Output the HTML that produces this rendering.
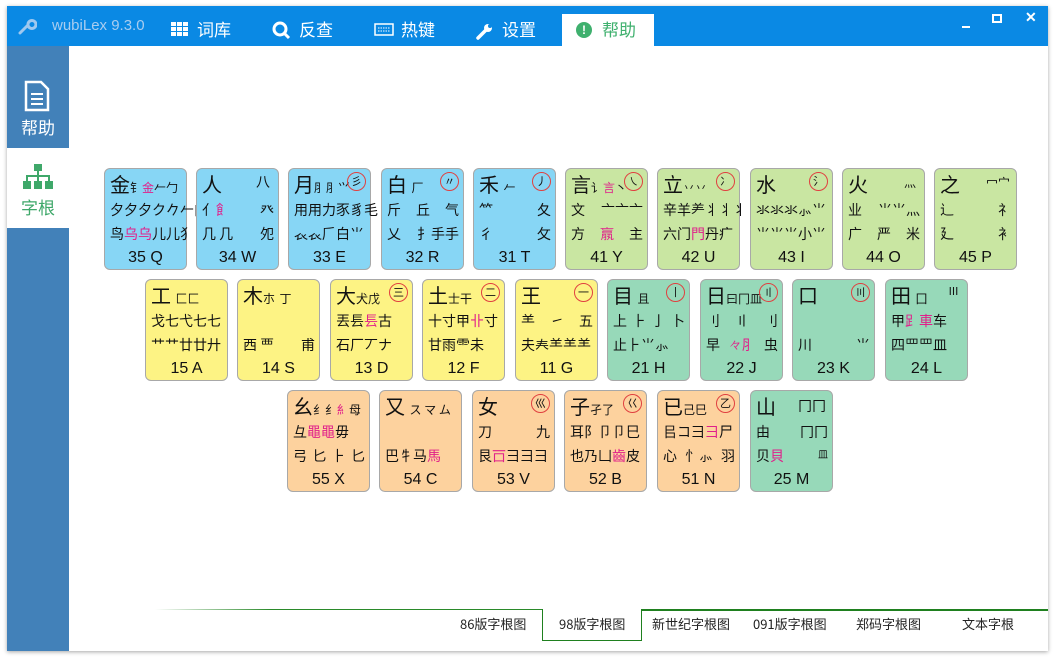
<!DOCTYPE html>
<html><head><meta charset="utf-8"><style>
*{margin:0;padding:0;box-sizing:border-box}
body{width:1057px;height:658px;background:#fff;position:relative;overflow:hidden;font-family:"Liberation Sans","Noto Sans CJK SC",sans-serif}
.win{position:absolute;left:7px;top:6px;width:1041px;height:645px;background:#fff;box-shadow:0 1px 4px rgba(0,0,0,.35)}
.title{position:absolute;left:0;top:0;width:1041px;height:40px;background:#0a89e4}
.t{position:absolute;top:10px;color:#fff;font-size:17px;font-family:"Noto Sans CJK SC",sans-serif}
.side{position:absolute;left:0;top:40px;width:62px;height:605px;background:#4281b9}
.sact{position:absolute;left:0;top:102px;width:62px;height:80px;background:#fff}
.key{position:absolute;width:83px;height:102px;border:1px solid #a8a8a8;border-radius:6px;font-family:"Noto Sans CJK SC",sans-serif;color:#111}
.l1{position:absolute;left:5px;top:0px;font-size:20px;white-space:nowrap}
.l1 small{font-size:12px}
.l2,.l3{position:absolute;left:5px;right:4px;font-size:14px;white-space:nowrap;display:flex;justify-content:space-between}
.l2{top:31px}.l3{top:55px}
.lab{position:absolute;left:0;right:0;top:80px;text-align:center;font-family:"Liberation Sans",sans-serif;font-size:16px}
.c{position:absolute;right:4px;top:3px;width:19px;height:19px;border:1px solid #e04040;border-radius:50%;font-size:11px;text-align:center;line-height:17px}
.p{color:#e0208a}
.B{background:#87d6f5}.G{background:#c9e6a2}.Y{background:#fdf384}.T{background:#97d9b9}.O{background:#fdd29e}
.tabs{position:absolute;top:608px;font-size:13px;font-family:"Noto Sans CJK SC",sans-serif;color:#222}
</style></head><body>
<div class="win">
<div class="title">
<svg style="position:absolute;left:10px;top:10px" width="20" height="20" viewBox="0 0 20 20"><path d="M3 17 L11 9 M11 9 a4 4 0 1 0 0 -1" stroke="#9fc8ef" stroke-width="3" fill="none" stroke-linecap="round"/></svg>
<div class="t" style="left:45px;top:11px;font-family:'Liberation Sans',sans-serif;font-size:15px;color:#a9cdf0">wubiLex 9.3.0</div>
<svg style="position:absolute;left:164px;top:16px" width="18" height="16"><g fill="#fff"><rect x="0" y="0" width="5" height="4"/><rect x="6" y="0" width="5" height="4"/><rect x="12" y="0" width="5" height="4"/><rect x="0" y="5" width="5" height="4"/><rect x="6" y="5" width="5" height="4"/><rect x="12" y="5" width="5" height="4"/><rect x="0" y="10" width="5" height="4"/><rect x="6" y="10" width="5" height="4"/><rect x="12" y="10" width="5" height="4"/></g></svg>
<div class="t" style="left:190px">词库</div>
<svg style="position:absolute;left:265px;top:15px" width="20" height="20"><circle cx="8" cy="8" r="6" stroke="#fff" stroke-width="3" fill="none"/><path d="M12 12 L17 17" stroke="#fff" stroke-width="3"/></svg>
<div class="t" style="left:292px">反查</div>
<svg style="position:absolute;left:367px;top:17px" width="20" height="13"><rect x="1" y="1" width="18" height="11" stroke="#fff" stroke-width="1.5" fill="none"/><path d="M4 5h12M4 8h12" stroke="#fff" stroke-dasharray="1.5 1"/></svg>
<div class="t" style="left:394px">热键</div>
<svg style="position:absolute;left:468px;top:15px" width="20" height="20"><path d="M3 17 L11 9" stroke="#fff" stroke-width="3.5" stroke-linecap="round"/><circle cx="13" cy="7" r="4" fill="#fff"/><circle cx="15" cy="5" r="2" fill="#0a89e4"/></svg>
<div class="t" style="left:495px">设置</div>
<div style="position:absolute;left:555px;top:8px;width:92px;height:32px;background:#fff"></div>
<div style="position:absolute;left:569px;top:16px;width:16px;height:16px;border-radius:50%;background:#3fb06e;color:#fff;font-size:12px;font-weight:bold;text-align:center;line-height:16px">!</div>
<div class="t" style="left:595px;color:#3fb06e">帮助</div>
<div style="position:absolute;left:955px;top:20px;width:8px;height:2px;background:#fff"></div>
<div style="position:absolute;left:985px;top:8px;width:10px;height:9px;border:2px solid #fff"></div>
<div style="position:absolute;left:1018px;top:3px;color:#fff;font-size:14px;font-weight:bold">✕</div>
</div>
<div class="side">
<svg style="position:absolute;left:17px;top:34px" width="26" height="32"><path d="M2 2h15l7 7v21H2z" stroke="#fff" stroke-width="2.5" fill="none"/><path d="M7 14h12M7 19h12M7 24h12" stroke="#fff" stroke-width="2"/></svg>
<div style="position:absolute;left:14px;top:68px;color:#fff;font-size:17px;font-family:'Noto Sans CJK SC',sans-serif">帮助</div>
<div class="sact">
<svg style="position:absolute;left:16px;top:16px" width="30" height="26"><g fill="#3fa86a"><rect x="11" y="0" width="8" height="7"/><rect x="14" y="7" width="2" height="5"/><rect x="3" y="11" width="24" height="2"/><rect x="3" y="11" width="2" height="6"/><rect x="25" y="11" width="2" height="6"/><rect x="14" y="11" width="2" height="6"/><rect x="0" y="17" width="8" height="8"/><rect x="11" y="17" width="8" height="8"/><rect x="22" y="17" width="8" height="8"/></g></svg>
<div style="position:absolute;left:14px;top:46px;color:#3fa86a;font-size:17px;font-family:'Noto Sans CJK SC',sans-serif">字根</div>
</div>
</div>
<div style="position:absolute;left:148px;top:603px;width:387px;height:1px;background:linear-gradient(90deg,#fff,#2a8a2a 30%)"></div>
<div style="position:absolute;left:535px;top:603px;width:100px;height:32px;border:1.5px solid #1f801f;border-top:none;background:#fff"></div>
<div style="position:absolute;left:634px;top:603px;width:407px;height:1.5px;background:#1f801f"></div>
<div class="tabs" style="left:453px">86版字根图</div>
<div class="tabs" style="left:552px">98版字根图</div>
<div class="tabs" style="left:645px">新世纪字根图</div>
<div class="tabs" style="left:746px">091版字根图</div>
<div class="tabs" style="left:849px">郑码字根图</div>
<div class="tabs" style="left:955px">文本字根</div>
</div>

<div class="key B" style="left:104px;top:168px"><div class="l1">金<small>钅<span class="p">金</span>𠂉勹</small></div><div class="l2"><span>夕夕夕ク𠂊𠂉甶</span></div><div class="l3"><span>鸟<span class="p">乌乌</span>儿儿犭</span></div><div class="lab">35 Q</div></div>
<div class="key B" style="left:196px;top:168px"><div class="l1">人</div><div style="position:absolute;right:8px;top:3px;font-size:14px">八</div><div class="l2"><span>亻<span class="p">飠</span></span><span>癶</span></div><div class="l3"><span>几 几</span><span>夗</span></div><div class="lab">34 W</div></div>
<div class="key B" style="left:288px;top:168px"><div class="l1">月<small>⺼⺼⺍</small></div><div class="c">彡</div><div class="l2"><span>用用力豕豸毛</span></div><div class="l3"><span>𧘇𧘇𠂆白⺌</span></div><div class="lab">33 E</div></div>
<div class="key B" style="left:381px;top:168px"><div class="l1">白 <small>厂</small></div><div class="c">〃</div><div class="l2"><span>斤</span><span>丘</span><span>气</span></div><div class="l3"><span>乂</span><span>扌手手</span></div><div class="lab">32 R</div></div>
<div class="key B" style="left:473px;top:168px"><div class="l1">禾 <small>𠂉</small></div><div class="c">丿</div><div class="l2"><span>𥫗</span><span>夂</span></div><div class="l3"><span>彳</span><span>攵</span></div><div class="lab">31 T</div></div>
<div class="key G" style="left:565px;top:168px"><div class="l1">言<small>讠<span class="p">言</span>丶</small></div><div class="c">㇏</div><div class="l2"><span>文</span><span>亠亠亠</span></div><div class="l3"><span>方</span><span class="p">𣎆</span><span>主</span></div><div class="lab">41 Y</div></div>
<div class="key G" style="left:657px;top:168px"><div class="l1">立<small>丷丷</small></div><div class="c">冫</div><div class="l2"><span>辛羊⺶丬丬丬</span></div><div class="l3"><span>六门<span class="p">門</span>丹疒</span></div><div class="lab">42 U</div></div>
<div class="key G" style="left:750px;top:168px"><div class="l1">水 </div><div class="c">氵</div><div class="l2"><span>氺氺氺⺗⺌</span></div><div class="l3"><span>⺌⺌⺌小⺌</span></div><div class="lab">43 I</div></div>
<div class="key G" style="left:842px;top:168px"><div class="l1">火</div><div style="position:absolute;right:8px;top:5px;font-size:12px">灬</div><div class="l2"><span>业</span><span>⺌⺌灬</span></div><div class="l3"><span>广</span><span>严</span><span>米</span></div><div class="lab">44 O</div></div>
<div class="key G" style="left:934px;top:168px"><div class="l1">之</div><div style="position:absolute;right:6px;top:5px;font-size:12px">冖宀</div><div class="l2"><span>辶</span><span>礻</span></div><div class="l3"><span>廴</span><span>衤</span></div><div class="lab">45 P</div></div>

<div class="key Y" style="left:145px;top:279px"><div class="l1">工 <small>匚匚</small></div><div class="l2"><span>戈七弋七七</span></div><div class="l3"><span>艹艹廿廿廾</span></div><div class="lab">15 A</div></div>
<div class="key Y" style="left:237px;top:279px"><div class="l1">木<small>朩</small> <small>丁</small></div><div class="l2"><span></span></div><div class="l3"><span>西 覀</span><span>甫</span></div><div class="lab">14 S</div></div>
<div class="key Y" style="left:330px;top:279px"><div class="l1">大<small>犬戊</small></div><div class="c">三</div><div class="l2"><span>丟镸<span class="p">镸</span>古</span></div><div class="l3"><span>石厂丆ナ</span></div><div class="lab">13 D</div></div>
<div class="key Y" style="left:422px;top:279px"><div class="l1">土<small>士干</small></div><div class="c">二</div><div class="l2"><span>十寸甲<span class="p">卝</span>寸</span></div><div class="l3"><span>甘雨⻗未</span></div><div class="lab">12 F</div></div>
<div class="key Y" style="left:515px;top:279px"><div class="l1">王</div><div class="c">一</div><div class="l2"><span>⺷</span><span>㇀</span><span>五</span></div><div class="l3"><span>夫𡗗⺷⺷⺷</span></div><div class="lab">11 G</div></div>
<div class="key T" style="left:607px;top:279px"><div class="l1">目 <small>且</small></div><div class="c">丨</div><div class="l2"><span>上</span><span>⺊</span><span>亅</span><span>卜</span></div><div class="l3"><span>止⺊⺌⺗</span></div><div class="lab">21 H</div></div>
<div class="key T" style="left:700px;top:279px"><div class="l1">日<small>曰冂皿</small></div><div class="c">〢</div><div class="l2"><span>刂</span><span>〢</span><span>刂</span></div><div class="l3"><span>早</span><span class="p">𠚤⺼</span><span>虫</span></div><div class="lab">22 J</div></div>
<div class="key T" style="left:792px;top:279px"><div class="l1">口</div><div class="c">〣</div><div class="l2"></div><div class="l3"><span>川</span><span>⺌</span></div><div class="lab">23 K</div></div>
<div class="key T" style="left:885px;top:279px"><div class="l1">田 <small>囗</small></div><div class="c" style="border:none">Ⅲ</div><div class="l2"><span>甲<span class="p">⻊車</span>车</span></div><div class="l3"><span>四罒罒皿</span></div><div class="lab">24 L</div></div>

<div class="key O" style="left:287px;top:390px"><div class="l1">幺<small>纟纟<span class="p">糹</span>母</small></div><div class="l2"><span>彑<span class="p">黽黽</span>毋</span></div><div class="l3"><span>弓</span><span>匕</span><span>⺊</span><span>匕</span></div><div class="lab">55 X</div></div>
<div class="key O" style="left:379px;top:390px"><div class="l1">又 <small>ス マ ム</small></div><div class="l2"></div><div class="l3"><span>巴牜马<span class="p">馬</span></span></div><div class="lab">54 C</div></div>
<div class="key O" style="left:472px;top:390px"><div class="l1">女</div><div class="c">巛</div><div class="l2"><span>刀</span><span>九</span></div><div class="l3"><span>艮<span class="p">𠮛</span>彐彐彐</span></div><div class="lab">53 V</div></div>
<div class="key O" style="left:564px;top:390px"><div class="l1">子<small>孑了</small></div><div class="c">巜</div><div class="l2"><span>耳阝卩卩巳</span></div><div class="l3"><span>也乃凵<span class="p">齒</span>皮</span></div><div class="lab">52 B</div></div>
<div class="key O" style="left:657px;top:390px"><div class="l1">已<small>己巳</small></div><div class="c">乙</div><div class="l2"><span>㠯コ⺕<span class="p">⺕</span>尸</span></div><div class="l3"><span>心</span><span>忄⺗</span><span>羽</span></div><div class="lab">51 N</div></div>
<div class="key T" style="left:750px;top:390px"><div class="l1">山</div><div style="position:absolute;right:6px;top:5px;font-size:14px">冂冂</div><div class="l2"><span>由</span><span>冂冂</span></div><div class="l3"><span>贝<span class="p">貝</span></span><span style="font-size:10px">皿</span></div><div class="lab">25 M</div></div>
</body></html>
